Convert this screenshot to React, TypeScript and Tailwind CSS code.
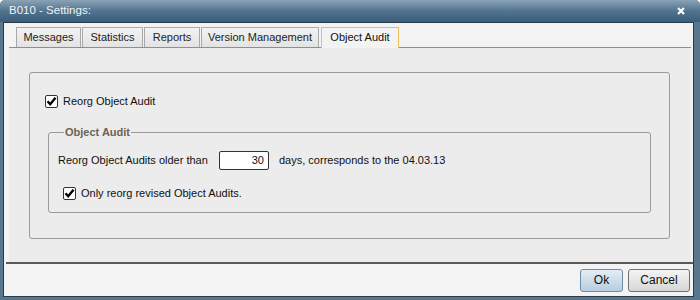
import React from 'react';

const font = { fontFamily: '"Liberation Sans", Arial, sans-serif' };

const Check = () => (
  <span className="flex h-[13px] w-[13px] shrink-0 items-center justify-center rounded-[2px] border border-[#333] bg-white">
    <svg width="11" height="11" viewBox="0 0 11 11">
      <path d="M1.5 5.3 L4.2 8.2 L9.5 1.8" fill="none" stroke="#000" strokeWidth="2.4" />
    </svg>
  </span>
);

const tabs = [
  { label: 'Messages', w: 'w-[65px]' },
  { label: 'Statistics', w: 'w-[61px]' },
  { label: 'Reports', w: 'w-[56px]' },
  { label: 'Version Management', w: 'w-[118px]' },
];

export default function App() {
  return (
    <div
      className="flex h-[300px] w-[700px] flex-col overflow-hidden whitespace-nowrap rounded-t-[5px] bg-[#58768e] text-[11px] text-[#111]"
      style={font}
    >
      {/* title bar */}
      <div className="flex h-[22px] shrink-0 items-center justify-between bg-gradient-to-b from-[#8aa3b6] via-[#52748f] to-[#3a5d7b] pl-[9px] pr-[15px]">
        <span className="text-[11.5px] text-[#eef3f6]">B010 - Settings:</span>
        <svg width="8" height="8" viewBox="0 0 8 8">
          <path d="M1 1 L7 7 M7 1 L1 7" stroke="#fff" strokeWidth="2.2" />
        </svg>
      </div>

      {/* body */}
      <div className="mb-[3px] ml-[3px] mr-[6px] flex flex-1 flex-col border border-[#2b3a47] bg-[#f3f3f3]">
        {/* tab strip */}
        <div className="flex h-[24px] shrink-0 items-end pl-[12px]">
          {tabs.map(t => (
            <div
              key={t.label}
              className={`${t.w} mr-[1px] flex h-[20px] items-center justify-center border border-b-0 border-[#a9a9a9] bg-gradient-to-b from-[#f2f2f2] to-[#e3e3e3] text-[#222]`}
            >
              {t.label}
            </div>
          ))}
          <div className="relative top-[1px] ml-[1px] flex h-[21px] w-[78px] items-center justify-center border border-b-0 border-[#e8c257] bg-[#f3f3f3] pb-[2px] text-[#111]">
            Object Audit
          </div>
        </div>

        {/* panel */}
        <div className="ml-[5px] mr-[2px] flex flex-1 flex-col border-t border-[#8e8e8e] bg-[#ececec] pb-[23px] pl-[20px] pr-[21px] pt-[24px]">
          <div className="flex flex-1 flex-col rounded-[3px] border border-[#9a9a9a] px-[18px] pb-[25px] pt-[21px]">
            <label className="flex h-[14px] items-center gap-[5px]">
              <span className="-ml-[3px]">
                <Check />
              </span>
              <span>Reorg Object Audit</span>
            </label>

            <fieldset className="mt-[17px] flex-1 rounded-[3px] border border-[#9a9a9a] px-[9px] pb-[12px]">
              <legend className="ml-[6px] px-[1px] text-[11px] font-bold leading-[14px] text-[#6b6352]">
                Object Audit
              </legend>
              <div className="mt-[12px] flex h-[19px] items-center">
                <span className="w-[149px] shrink-0">Reorg Object Audits older than</span>
                <span className="ml-[12px] flex h-[19px] w-[50px] items-center justify-end rounded-[2px] border border-[#333] bg-white pr-[4px]">
                  30
                </span>
                <span className="ml-[10px]">days, corresponds to the 04.03.13</span>
              </div>
              <label className="mt-[16px] flex h-[14px] items-center gap-[5px] pl-[5px]">
                <Check />
                <span>Only reorg revised Object Audits.</span>
              </label>
            </fieldset>
          </div>
        </div>

        {/* footer */}
        <div className="ml-[2px] flex h-[34px] shrink-0 items-center justify-end gap-[5px] border-t-2 border-[#5a5a5a] pr-[3px]">
          <button className="h-[23px] w-[43px] rounded-[3px] border border-[#6f8aa4] bg-gradient-to-b from-[#e4edf5] to-[#b8cde0] text-[12px] text-[#111]">
            Ok
          </button>
          <button className="h-[23px] w-[62px] rounded-[3px] border border-[#707070] bg-gradient-to-b from-[#f4f4f4] to-[#d6d6d6] text-[12px] text-[#111]">
            Cancel
          </button>
        </div>
      </div>
    </div>
  );
}
